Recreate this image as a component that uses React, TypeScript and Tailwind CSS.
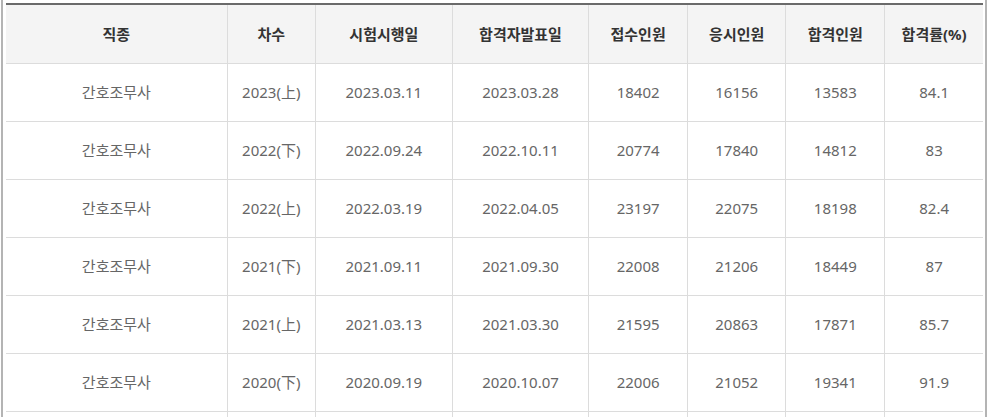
import React from "react";

const rows = [
  ["간호조무사", "2023(上)", "2023.03.11", "2023.03.28", "18402", "16156", "13583", "84.1"],
  ["간호조무사", "2022(下)", "2022.09.24", "2022.10.11", "20774", "17840", "14812", "83"],
  ["간호조무사", "2022(上)", "2022.03.19", "2022.04.05", "23197", "22075", "18198", "82.4"],
  ["간호조무사", "2021(下)", "2021.09.11", "2021.09.30", "22008", "21206", "18449", "87"],
  ["간호조무사", "2021(上)", "2021.03.13", "2021.03.30", "21595", "20863", "17871", "85.7"],
  ["간호조무사", "2020(下)", "2020.09.19", "2020.10.07", "22006", "21052", "19341", "91.9"],
  ["", "", "", "", "", "", "", ""],
];

const heads = ["직종", "차수", "시험시행일", "합격자발표일", "접수인원", "응시인원", "합격인원", "합격률(%)"];
const widths = [221, 88, 137, 136, 99, 98, 99, 98];

export default function App() {
  return (
    <div
      className="w-[988px] h-[417px] overflow-hidden bg-white"
      style={{ fontFamily: '"Noto Sans", "Noto Sans CJK KR", sans-serif' }}
    >
      <div className="ml-[1px] w-[986px] h-[417px] border-l-2 border-r-2 border-[#b4b4b4] pl-[3px] pr-[2px] pt-[3px]">
        <table className="table-fixed border-collapse w-[977px] border-t-2 border-t-[#6a6a6a]">
          <colgroup>
            {widths.map((w, i) => (
              <col key={i} style={{ width: w }} />
            ))}
          </colgroup>
          <thead>
            <tr className="h-[59px] bg-[#f4f4f4]">
              {heads.map((h, i) => (
                <th
                  key={i}
                  className={`text-[15px] font-bold text-[#333] text-center border-b border-[#dcdcdc] ${i > 0 ? "border-l" : ""}`}
                >
                  {h}
                </th>
              ))}
            </tr>
          </thead>
          <tbody>
            {rows.map((r, ri) => (
              <tr key={ri} className="h-[58px]">
                {r.map((c, ci) => (
                  <td
                    key={ci}
                    className={`text-[15px] text-[#666] text-center border-b border-[#dcdcdc] ${ci > 0 ? "border-l" : ""}`}
                  >
                    {c}
                  </td>
                ))}
              </tr>
            ))}
          </tbody>
        </table>
      </div>
    </div>
  );
}
